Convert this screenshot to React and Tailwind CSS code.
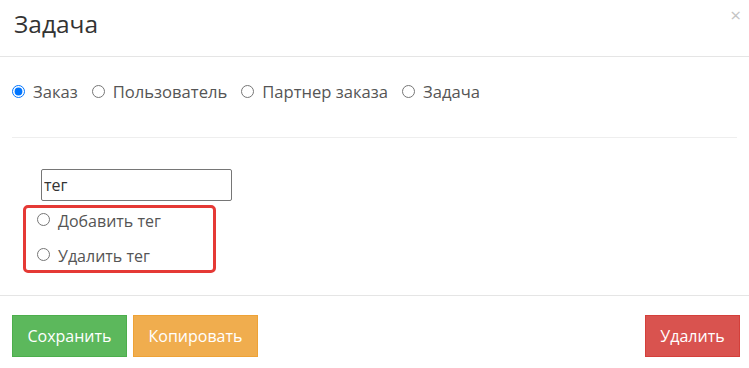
import { useState } from 'react';

const TARGETS = ['Заказ', 'Пользователь', 'Партнер заказа', 'Задача'];

export default function App() {
  const [target, setTarget] = useState('Заказ');
  const [action, setAction] = useState(null);

  return (
    <div className="w-[749px] h-[368px] bg-white text-[#333] font-['Open_Sans',sans-serif]">
      {/* header */}
      <div className="h-[57px] border-b border-[#e5e5e5] pl-[14px] pr-[8px] flex items-center justify-between">
        <h4 className="text-[24.5px] text-[#333] leading-none -mt-[8px]">Задача</h4>
        <button type="button" className="text-[#c4c4c4] text-[19px] leading-none -mt-[26px]">×</button>
      </div>

      {/* body */}
      <div className="px-3">
        <div className="h-[80px] pb-[10px] flex items-center gap-[14px] text-[16.6px] text-[#555]">
          {TARGETS.map((t) => (
            <label key={t} className="flex items-center gap-[8px]">
              <input
                type="radio"
                name="target"
                checked={target === t}
                onChange={() => setTarget(t)}
                className="w-[13px] h-[13px] m-0"
              />
              {t}
            </label>
          ))}
        </div>
        <div className="border-t border-[#eee]" />

        <div className="pt-[31px] pl-[29px]">
          <input
            defaultValue="тег"
            className="w-[191px] h-[32px] border border-[#767676] rounded-[2px] px-[2px] text-[16px] text-[#333] outline-none"
          />
          <div className="-ml-[18px] mt-[4px] w-[193px] h-[68px] border-[3px] border-[#e53935] rounded-[5px] pl-[11px] text-[16px] text-[#555]">
            <label className="h-[26px] flex items-center gap-[8px]">
              <input
                type="radio"
                name="action"
                checked={action === 'add'}
                onChange={() => setAction('add')}
                className="w-[13px] h-[13px] m-0 -mt-[3px]"
              />
              Добавить тег
            </label>
            <label className="mt-[8px] h-[28px] flex items-center gap-[8px]">
              <input
                type="radio"
                name="action"
                checked={action === 'del'}
                onChange={() => setAction('del')}
                className="w-[13px] h-[13px] m-0 -mt-[3px]"
              />
              Удалить тег
            </label>
          </div>
        </div>
      </div>

      {/* footer */}
      <div className="mt-[22px] border-t border-[#e5e5e5] pl-3 pr-[9px] pt-[19px] flex items-center justify-between">
        <div className="flex gap-[6px]">
          <button type="button" className="h-[42px] w-[115px] bg-[#5cb85c] border border-[#4cae4c] text-white text-[16px]">
            Сохранить
          </button>
          <button type="button" className="h-[42px] w-[125px] bg-[#f0ad4e] border border-[#eea236] text-white text-[16px]">
            Копировать
          </button>
        </div>
        <button type="button" className="h-[42px] w-[95px] bg-[#d9534f] border border-[#d43f3a] text-white text-[16px]">
          Удалить
        </button>
      </div>
    </div>
  );
}
